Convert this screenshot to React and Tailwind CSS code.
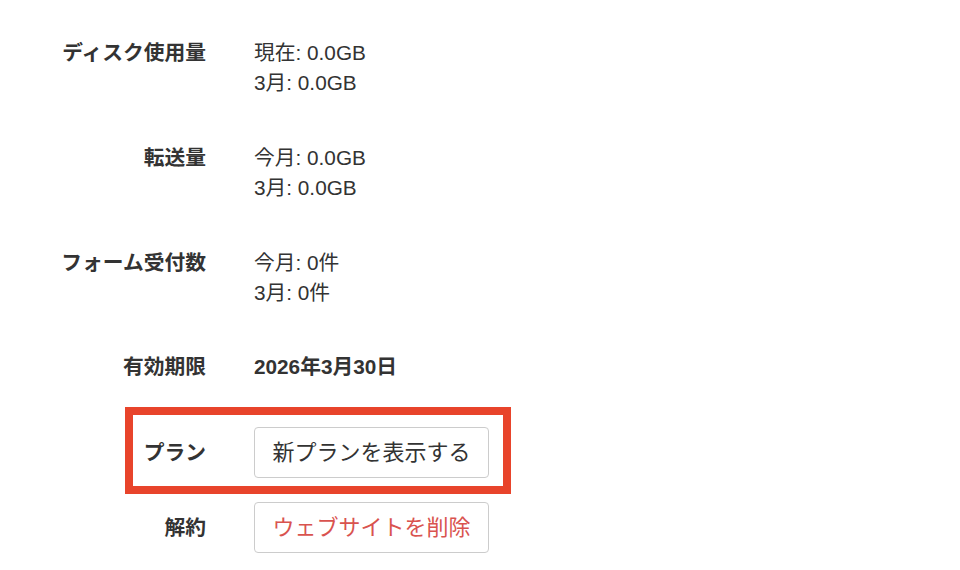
import React from "react";

const rows = [
    { label: "ディスク使用量", lines: ["現在: 0.0GB", "3月: 0.0GB"] },
    { label: "転送量", lines: ["今月: 0.0GB", "3月: 0.0GB"] },
    { label: "フォーム受付数", lines: ["今月: 0件", "3月: 0件"] },
];

const App = () => {
    return (
        <div className="min-h-[570px] w-[960px] bg-white text-[#333] text-[20.75px] leading-[30px] font-['Liberation_Sans','Noto_Sans_CJK_JP',sans-serif] pt-[38px]">

            {/* Usage rows */}
            <div className="flex flex-col gap-[45px]">
                {rows.map((row) => (
                    <div key={row.label} className="flex">
                        <div className="w-[206px] text-right font-bold">{row.label}</div>
                        <div className="ml-12">
                            {row.lines.map((line) => (
                                <div key={line}>{line}</div>
                            ))}
                        </div>
                    </div>
                ))}
            </div>

            {/* Expiry */}
            <div className="flex mt-[44px]">
                <div className="w-[206px] text-right font-bold">有効期限</div>
                <div className="ml-12 font-bold">2026年3月30日</div>
            </div>

            {/* Plan (highlighted) */}
            <div className="ml-[125px] mt-[25px] w-[386px] border-[8px] border-[#e8442b] pt-3 pb-2">
                <div className="flex items-center">
                    <div className="w-[73px] text-right font-bold">プラン</div>
                    <button className="ml-12 w-[235px] h-[51px] rounded-[4px] border border-[#cccccc] bg-white text-[22px] text-[#333]">
                        新プランを表示する
                    </button>
                </div>
            </div>

            {/* Cancel */}
            <div className="flex items-center mt-2">
                <div className="w-[206px] text-right font-bold">解約</div>
                <button className="ml-12 w-[235px] h-[51px] rounded-[4px] border border-[#cccccc] bg-white text-[22px] text-[#d9534f]">
                    ウェブサイトを削除
                </button>
            </div>
        </div>
    );
};

export default App;
